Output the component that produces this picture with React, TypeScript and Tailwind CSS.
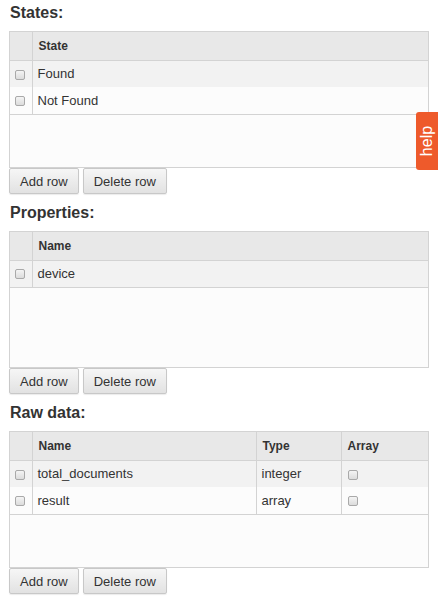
import React from "react";

const Check = () => (
  <span className="inline-block w-[10px] h-[10px] rounded-[2px] border border-[#a9a9a9] bg-gradient-to-b from-[#f4f4f4] to-[#dcdcdc] align-middle" />
);

const Btn = ({ children }: { children: React.ReactNode }) => (
  <button className="h-[26px] px-[10px] border border-[#c8c8c8] rounded-[2px] bg-gradient-to-b from-[#f6f6f6] to-[#e2e2e2] text-[13px] text-[#333] leading-none shadow-[0_1px_1px_rgba(0,0,0,0.08)]">
    {children}
  </button>
);

type Col = { label: string; width?: string };

const Section = ({
  title,
  cols,
  rows,
}: {
  title: string;
  cols: Col[];
  rows: (string | "check")[][];
}) => (
  <div className="h-[200px] flex flex-col">
    <h2 className="h-[31px] pl-[10px] pt-[3px] text-[16px] font-bold text-[#333] leading-[20px]">{title}</h2>
    <div className="mx-[9px] h-[137px] border border-[#d3d3d3] bg-[#fcfcfc] overflow-hidden">
      <table className="w-full border-collapse table-fixed">
        <colgroup>
          <col className="w-[22px]" />
          {cols.map((c, i) => (
            <col key={i} className={c.width ?? ""} />
          ))}
        </colgroup>
        <thead>
          <tr className="h-[28px] bg-[#e8e8e8] border-b border-[#d3d3d3]">
            <th className="border-r border-[#d3d3d3]" />
            {cols.map((c, i) => (
              <th
                key={i}
                className={`text-left font-bold text-[12px] text-[#333] pl-[6px] ${i < cols.length - 1 ? "border-r border-[#d3d3d3]" : ""}`}
              >
                {c.label}
              </th>
            ))}
          </tr>
        </thead>
        <tbody>
          {rows.map((r, ri) => (
            <tr
              key={ri}
              className={`h-[27px] ${ri % 2 === 0 ? "bg-[#f2f2f2]" : "bg-[#fcfcfc]"} ${ri === rows.length - 1 ? "border-b border-[#d3d3d3]" : ""}`}
            >
              <td className="border-r border-[#d3d3d3] pl-[5px]">
                <Check />
              </td>
              {r.map((v, ci) => (
                <td
                  key={ci}
                  className={`text-[13px] text-[#333] pl-[5px] ${ci < r.length - 1 ? "border-r border-[#d3d3d3]" : ""}`}
                >
                  {v === "check" ? <span className="pl-[1px]"><Check /></span> : v}
                </td>
              ))}
            </tr>
          ))}
        </tbody>
      </table>
    </div>
    <div className="flex gap-[4px] pl-[9px]">
      <Btn>Add row</Btn>
      <Btn>Delete row</Btn>
    </div>
  </div>
);

export default function App() {
  return (
    <div
      className="relative w-[438px] h-[599px] bg-white overflow-hidden"
      style={{ fontFamily: '"Liberation Sans", Arial, sans-serif' }}
    >
      <Section title="States:" cols={[{ label: "State" }]} rows={[["Found"], ["Not Found"]]} />
      <Section title="Properties:" cols={[{ label: "Name" }]} rows={[["device"]]} />
      <Section
        title="Raw data:"
        cols={[{ label: "Name" }, { label: "Type", width: "w-[85px]" }, { label: "Array", width: "w-[87px]" }]}
        rows={[
          ["total_documents", "integer", "check"],
          ["result", "array", "check"],
        ]}
      />
      <div className="absolute right-0 top-[112px] w-[22px] h-[58px] bg-[#ee5a2b] rounded-l-[3px] flex items-center justify-center">
        <span className="-rotate-90 text-white text-[16px] leading-none whitespace-nowrap">help</span>
      </div>
    </div>
  );
}
